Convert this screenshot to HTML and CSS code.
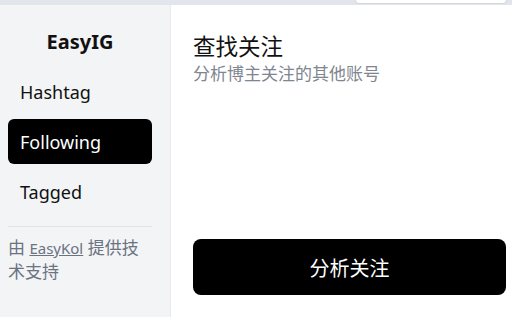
FILE: index.html
```html
<!DOCTYPE html>
<html lang="zh">
<head>
<meta charset="utf-8">
<link rel="stylesheet" href="styles.css">
</head>
<body>
<div class="topbar"><div class="tab"></div></div>
<div class="app">
  <aside class="sidebar">
    <div class="brand">EasyIG</div>
    <nav class="nav">
      <div class="nav-item">Hashtag</div>
      <div class="nav-item active">Following</div>
      <div class="nav-item">Tagged</div>
    </nav>
    <div class="divider"></div>
    <p class="credit">由 <a href="#" class="credit-link">EasyKol</a> 提供技术支持</p>
  </aside>
  <main class="main">
    <h1 class="title">查找关注</h1>
    <p class="subtitle">分析博主关注的其他账号</p>
    <button class="cta">分析关注</button>
  </main>
</div>
</body>
</html>
```
FILE: styles.css
```css
* { box-sizing: border-box; }
html, body { margin: 0; padding: 0; background: #fff; }
body {
  width: 512px;
  height: 320px;
  overflow: hidden;
  font-family: "Noto Sans", "Noto Sans CJK SC", sans-serif;
  color: #111;
}
.topbar {
  height: 5px;
  background: #e2e5ec;
  display: flex;
}
.tab {
  margin-left: 355px;
  width: 152px;
  height: 4px;
  background: #fff;
  border: 1px solid #d4d6da;
  border-top: none;
  border-radius: 0 0 8px 8px;
}
.app {
  display: flex;
  height: 312px;
}
.sidebar {
  width: 171px;
  flex: none;
  background: #f3f4f6;
  border-right: 1px solid #e8e9ec;
  padding: 0 18px 0 8px;
  display: flex;
  flex-direction: column;
}
.brand {
  font-size: 20px;
  font-weight: 700;
  text-align: center;
  line-height: 26px;
  margin: 24px 0 14px;
}
.nav {
  display: flex;
  flex-direction: column;
  gap: 5px;
}
.nav-item {
  height: 45px;
  display: flex;
  align-items: center;
  padding-left: 12px;
  font-size: 18px;
  border-radius: 6px;
  color: #111;
}
.nav-item.active {
  background: #000;
  color: #fff;
}
.divider {
  height: 1px;
  background: #e2e4e8;
  margin: 12px 0 9px;
}
.credit {
  margin: 0;
  font-size: 17px;
  line-height: 24px;
  color: #6b7280;
}
.credit-link {
  font-size: 15px;
  color: #6b7280;
  text-decoration: underline;
}
.main {
  flex: 1;
  display: flex;
  flex-direction: column;
  padding: 27px 6px 22px 22px;
}
.title {
  margin: 0;
  font-size: 22.5px;
  font-weight: 400;
  line-height: 30px;
  color: #111;
}
.subtitle {
  margin: 0;
  font-size: 17px;
  line-height: 24px;
  color: #80868f;
}
.cta {
  margin-top: auto;
  height: 56px;
  width: 100%;
  border: none;
  border-radius: 8px;
  background: #000;
  color: #fff;
  font-family: "Noto Sans", "Noto Sans CJK SC", sans-serif;
  font-size: 20px;
}
```
